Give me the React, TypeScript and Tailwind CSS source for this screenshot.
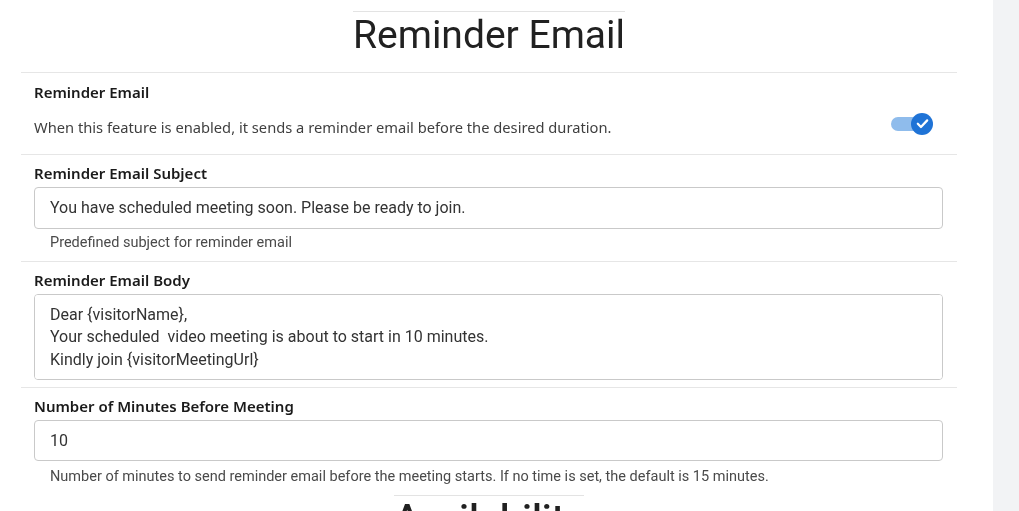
import { useState } from "react";

const labelCls = "block font-['Noto_Sans',sans-serif] font-semibold text-[15px] leading-[20px] text-[#1a1a1a]";
const helpCls = "mt-[5px] pl-[16px] font-['Roboto',sans-serif] text-[14.5px] leading-[18px] text-[#4a4a4a]";
const boxCls = "w-full rounded-[4px] border border-[#c9c9c9] bg-white px-[15px] font-['Roboto',sans-serif] text-[16px] text-[#333] outline-none";

const Toggle = ({ on, onChange }: { on: boolean; onChange: () => void }) => (
    <button onClick={onChange} className="relative h-[22px] w-[42px] shrink-0">
        <span className="absolute left-0 top-[4px] h-[14px] w-[32px] rounded-full bg-[#8fbcec]" />
        <span className="absolute right-0 top-0 flex h-[22px] w-[22px] items-center justify-center rounded-full bg-[#1f73d6]">
            {on && (
                <svg width="15" height="15" viewBox="0 0 24 24" fill="none" stroke="white" strokeWidth="3.6" strokeLinecap="round" strokeLinejoin="round">
                    <path d="M4.5 12.5l5 5L19.5 7" />
                </svg>
            )}
        </span>
    </button>
);

const App = () => {
    const [enabled, setEnabled] = useState(true);

    return (
        <div className="flex min-h-[511px] w-full overflow-hidden bg-white">
            <main className="flex-1 pl-[21px] pr-[36px]">
                {/* Title */}
                <div className="pt-[11px] text-center">
                    <h1 className="inline-block border-t border-[#e3e3e3] font-['Roboto',sans-serif] text-[39px] font-normal leading-[1.2] text-[#212121]">
                        Reminder Email
                    </h1>
                </div>

                <div className="mt-[13px] border-t border-[#e6e6e6]">
                    {/* Toggle */}
                    <section className="border-b border-[#e6e6e6] pl-[13px] pr-[14px] pt-[9px] pb-[13px]">
                        <span className={labelCls}>Reminder Email</span>
                        <div className="mt-[11px] flex items-center justify-between">
                            <p className="font-['Noto_Sans',sans-serif] text-[14.7px] leading-[22px] text-[#3f3f3f]">
                                When this feature is enabled, it sends a reminder email before the desired duration.
                            </p>
                            <div className="mr-[10px]">
                                <Toggle on={enabled} onChange={() => setEnabled(!enabled)} />
                            </div>
                        </div>
                    </section>

                    {/* Subject */}
                    <section className="border-b border-[#e6e6e6] pl-[13px] pr-[14px] pt-[8px] pb-[9px]">
                        <label className={labelCls}>Reminder Email Subject</label>
                        <input
                            className={`${boxCls} mt-[4px] h-[42px]`}
                            defaultValue="You have scheduled meeting soon. Please be ready to join."
                        />
                        <p className={helpCls}>Predefined subject for reminder email</p>
                    </section>

                    {/* Body */}
                    <section className="border-b border-[#e6e6e6] pl-[13px] pr-[14px] pt-[8px] pb-[7px]">
                        <label className={labelCls}>Reminder Email Body</label>
                        <textarea
                            className={`${boxCls} mt-[4px] block h-[86px] resize-none py-[9px] leading-[22.5px]`}
                            defaultValue={"Dear {visitorName},\nYour scheduled  video meeting is about to start in 10 minutes.\nKindly join {visitorMeetingUrl}"}
                        />
                    </section>

                    {/* Minutes */}
                    <section className="pl-[13px] pr-[14px] pt-[8px]">
                        <label className={labelCls}>Number of Minutes Before Meeting</label>
                        <input className={`${boxCls} mt-[4px] h-[41px]`} defaultValue="10" />
                        <p className={`${helpCls} mt-[7px]`}>
                            Number of minutes to send reminder email before the meeting starts. If no time is set, the default is 15 minutes.
                        </p>
                    </section>
                </div>

                {/* Next block */}
                <div className="mt-[9px] text-center">
                    <h2 className="inline-block border-t border-[#e3e3e3] font-['Roboto',sans-serif] text-[39px] font-medium leading-[1.2] text-[#212121]">
                        Availability
                    </h2>
                </div>
            </main>
            <aside className="w-[26px] shrink-0 bg-[#f2f3f5]" />
        </div>
    );
};

export default App;
